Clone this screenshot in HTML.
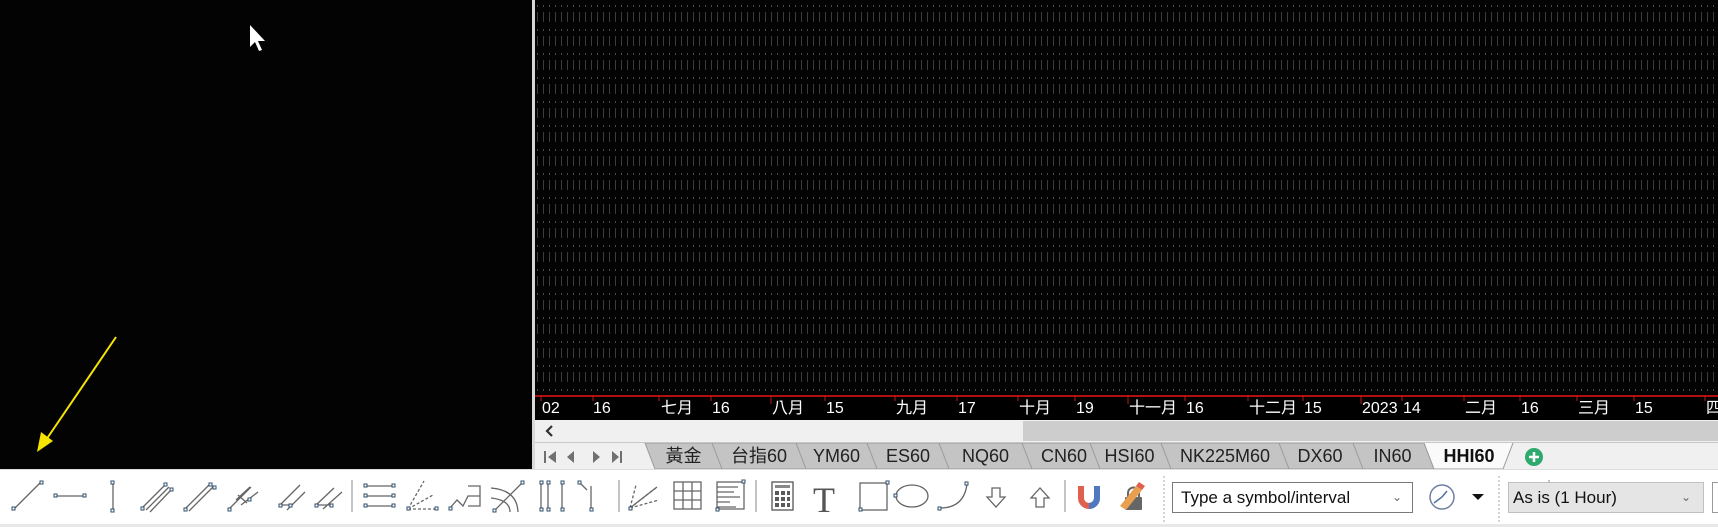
<!DOCTYPE html>
<html><head><meta charset="utf-8"><style>
*{margin:0;padding:0;box-sizing:border-box}
body{width:1718px;height:527px;overflow:hidden;background:#fff;position:relative;font-family:"Liberation Sans","Noto Sans CJK TC",sans-serif}
.abs{position:absolute}
.lbl{position:absolute;top:400px;color:#fff;font-size:16px;line-height:18px;white-space:nowrap}
.tab{position:absolute;top:443px;height:27px;font-size:18px;line-height:27px;color:#222;text-align:center}
</style></head><body>
<div class="abs" style="left:0;top:0;width:532px;height:469px;background:#030303"></div>
<div class="abs" style="left:532px;top:0;width:3px;height:469px;background:#d8d8d8"></div>
<svg class="abs" style="left:0;top:0" width="535" height="469">
<path d="M116 337 L46 440" stroke="#f5e400" stroke-width="2"/>
<path d="M37 452 L41 432 L53 441 Z" fill="#f5e400"/>
<path d="M250 25 L250 47 L255 42 L259 51 L262 50 L258 41 L265 41 Z" fill="#fff"/>
</svg>
<svg class="abs" style="left:535px;top:0" width="1183" height="396">
<defs><pattern id="g" width="6" height="24" patternUnits="userSpaceOnUse">
<rect x="2" y="5" width="1" height="2" fill="#4a4a4a"/>
<rect x="2" y="12" width="1" height="10" fill="#3c3c3c"/>
</pattern></defs>
<rect width="1183" height="396" fill="#030303"/>
<rect width="1183" height="396" fill="url(#g)"/>
</svg>
<div class="abs" style="left:535px;top:394px;width:1183px;height:26px;background:#000"></div>
<div class="abs" style="left:535px;top:395px;width:1183px;height:2px;background:#b01010"></div>
<svg class="abs" style="left:535px;top:395px" width="1183" height="10">
<g stroke="#c01818" stroke-width="1">
<path d="M6 0v6M58 0v6M124 0v6M176 0v6M236 0v9M290 0v6M360 0v6M422 0v6M483 0v6M540 0v6M593 0v9M650 0v6M713 0v6M768 0v6M826 0v9M867 0v6M929 0v6M985 0v6M1042 0v6M1099 0v6M1170 0v6"/>
</g></svg>
<div class="lbl" style="left:542px">02</div><div class="lbl" style="left:593px">16</div>
<div class="lbl" style="left:661px">七月</div><div class="lbl" style="left:712px">16</div>
<div class="lbl" style="left:772px">八月</div><div class="lbl" style="left:826px">15</div>
<div class="lbl" style="left:896px">九月</div><div class="lbl" style="left:958px">17</div>
<div class="lbl" style="left:1019px">十月</div><div class="lbl" style="left:1076px">19</div>
<div class="lbl" style="left:1129px">十一月</div><div class="lbl" style="left:1186px">16</div>
<div class="lbl" style="left:1249px">十二月</div><div class="lbl" style="left:1304px">15</div>
<div class="lbl" style="left:1362px">2023</div><div class="lbl" style="left:1403px">14</div>
<div class="lbl" style="left:1465px">二月</div><div class="lbl" style="left:1521px">16</div>
<div class="lbl" style="left:1578px">三月</div><div class="lbl" style="left:1635px">15</div>
<div class="lbl" style="left:1706px">四</div>
<!-- scrollbar -->
<div class="abs" style="left:535px;top:420px;width:1183px;height:22px;background:#f0f0f0"></div>
<div class="abs" style="left:1023px;top:421px;width:695px;height:20px;background:#cdcdcd"></div>
<svg class="abs" style="left:540px;top:423px" width="20" height="16"><path d="M12 3 L7 8 L12 13" stroke="#333" stroke-width="2.2" fill="none"/></svg>
<!-- tabs -->
<div class="abs" style="left:535px;top:442px;width:1183px;height:28px;background:#f0f0f0;border-top:1px solid #c8c8c8"></div>
<svg class="abs" style="left:540px;top:446px" width="95" height="22" fill="#707070">
<rect x="4" y="5" width="2" height="12"/><path d="M16 5v12l-8-6z"/>
<path d="M34 5v12l-7-6z"/><path d="M53 5v12l7-6z"/>
<path d="M72 5v12l7-6z"/><rect x="80" y="5" width="2" height="12"/>
</svg>
<svg class="abs" style="left:0;top:443px" width="1718" height="27">
<path d="M645 0 L655 26 L1434 26 L1424 0 Z" fill="#c4c4c4" stroke="#9a9a9a"/>
<g stroke="#9a9a9a" fill="none"><path d="M712 0l10 26M796 0l10 26M867 0l10 26M939 0l10 26M1022 0l10 26M1090 0l10 26M1161 0l10 26M1279 0l10 26M1353 0l10 26"/></g>
<path d="M1424 0 L1434 26 L1503 26 L1513 0" fill="#fafafa" stroke="#9a9a9a"/>
</svg>
<svg class="abs" style="left:1525px;top:448px" width="20" height="20"><circle cx="9" cy="9" r="9" fill="#2eaa6e"/><path d="M9 4v10M4 9h10" stroke="#fff" stroke-width="2.5"/></svg>
<div class="tab" style="left:655px;width:57px">黃金</div>
<div class="tab" style="left:722px;width:74px">台指60</div>
<div class="tab" style="left:806px;width:61px">YM60</div>
<div class="tab" style="left:877px;width:62px">ES60</div>
<div class="tab" style="left:949px;width:73px">NQ60</div>
<div class="tab" style="left:1030px;width:68px">CN60</div>
<div class="tab" style="left:1098px;width:63px">HSI60</div>
<div class="tab" style="left:1171px;width:108px">NK225M60</div>
<div class="tab" style="left:1287px;width:66px">DX60</div>
<div class="tab" style="left:1361px;width:63px">IN60</div>
<div class="tab" style="left:1432px;width:74px;font-weight:bold;color:#111">HHI60</div>
<!-- toolbar -->
<div class="abs" style="left:0;top:469px;width:1718px;height:58px;background:#fff;border-top:1px solid #ddd"></div>
<div class="abs" style="left:0;top:524px;width:1718px;height:3px;background:#e8e8e8"></div>
<svg class="abs" style="left:0;top:469px" width="1718" height="56">
<g transform="translate(0,-469)" fill="none" stroke="#666" stroke-width="1.3">
<path d="M14 509L41 482"/><path d="M56 496H84"/><path d="M113 482V511"/>
<path d="M142 508L165 485M146 510L169 487M150 512L171 490"/>
<path d="M185 509L210 484M189 511L213 487"/>
<path d="M229 509L251 487M236 500L250 487M241 505L258 492M238 495L247 503"/>
<path d="M280 505L300 485M287 510L305 492M279 505L290 505"/>
<path d="M316 505L334 488M323 509L342 492M316 505L331 505"/>
<path d="M366 486H393M366 496H393M366 506H393"/>
<path d="M408 509L436 509M408 509L424 481M408 509L433 495" stroke-dasharray="3 2"/>
<path d="M450 508L457 500L463 506L468 496H480M468 486H480V506H468M468 496H478"/>
<path d="M494 511L522 483M491 488Q517 490 518 512M491 498Q510 500 510 512"/>
<path d="M541 482V510M548 482V510M562 482V510M579 482L587 490M591 486V510"/>
<path d="M630 508L657 487M630 508L636 485M630 508L659 500" stroke-dasharray="3 2"/>
<path d="M630 508L657 487"/>
<rect x="674" y="482" width="27" height="27"/><path d="M683 482V509M692 482V509M674 491H701M674 500H701"/>
<rect x="717" y="482" width="27" height="27"/><path d="M717 487H738M717 492H734M717 497H740M717 502H730M717 507H736"/>
<rect x="772" y="482" width="21" height="28" stroke="#555"/>
<rect x="860" y="483" width="27" height="27"/>
<ellipse cx="912" cy="496" rx="16" ry="11"/>
<path d="M940 508Q964 508 967 484"/>
<path d="M992 488H1000V497H1005L996 507L987 497H992Z"/>
<path d="M1036 507H1044V498H1049L1040 488L1031 498H1036Z"/>
</g>
<text x="824" y="43" font-family="Liberation Serif,serif" font-size="36" fill="#555" text-anchor="middle">T</text>
<g transform="translate(0,-469)" fill="#5a5a5a">
<rect x="775" y="485" width="15" height="3" fill="#888"/>
<rect x="775" y="491" width="4" height="4"/><rect x="781" y="491" width="4" height="4"/><rect x="787" y="491" width="3" height="4"/>
<rect x="775" y="497" width="4" height="4"/><rect x="781" y="497" width="4" height="4"/><rect x="787" y="497" width="3" height="4"/>
<rect x="775" y="503" width="4" height="4"/><rect x="781" y="503" width="4" height="4"/><rect x="787" y="503" width="3" height="4"/>
</g>
<g transform="translate(0,-469)" fill="#fff" stroke="#2e4e6e" stroke-width="1">
<rect x="12" y="507" width="3" height="3"/><rect x="40" y="481" width="3" height="3"/>
<rect x="54" y="494" width="3" height="3"/><rect x="83" y="494" width="3" height="3"/>
<rect x="111" y="481" width="3" height="3"/><rect x="111" y="509" width="3" height="3"/>
<rect x="164" y="483" width="3" height="3"/><rect x="170" y="488" width="3" height="3"/><rect x="141" y="507" width="3" height="3"/>
<rect x="209" y="483" width="3" height="3"/><rect x="213" y="486" width="3" height="3"/><rect x="184" y="508" width="3" height="3"/>
<rect x="228" y="508" width="3" height="3"/><rect x="248" y="498" width="3" height="3"/>
<rect x="279" y="504" width="3" height="3"/><rect x="289" y="504" width="3" height="3"/>
<rect x="315" y="504" width="3" height="3"/><rect x="330" y="504" width="3" height="3"/>
<rect x="364" y="484" width="3" height="3"/><rect x="392" y="484" width="3" height="3"/><rect x="364" y="494" width="3" height="3"/><rect x="392" y="494" width="3" height="3"/><rect x="364" y="504" width="3" height="3"/><rect x="392" y="504" width="3" height="3"/>
<rect x="407" y="507" width="3" height="3"/><rect x="435" y="507" width="3" height="3"/><rect x="449" y="507" width="3" height="3"/>
<rect x="493" y="509" width="3" height="3"/><rect x="521" y="481" width="3" height="3"/>
<rect x="540" y="481" width="3" height="3"/><rect x="547" y="481" width="3" height="3"/><rect x="561" y="481" width="3" height="3"/><rect x="578" y="481" width="3" height="3"/>
<rect x="540" y="508" width="3" height="3"/><rect x="547" y="508" width="3" height="3"/><rect x="561" y="508" width="3" height="3"/><rect x="590" y="508" width="3" height="3"/>
<rect x="629" y="507" width="3" height="3"/><rect x="716" y="508" width="3" height="3"/><rect x="742" y="480" width="3" height="3"/>
<rect x="859" y="508" width="3" height="3"/><rect x="886" y="481" width="3" height="3"/><rect x="894" y="494" width="3" height="3"/>
<rect x="938" y="507" width="3" height="3"/><rect x="965" y="482" width="3" height="3"/>
</g>
<g transform="translate(0,-469)" stroke="#888" stroke-width="1">
<path d="M352 480V512M619 480V512M756 480V512M1065 480V512M1549 480V512"/>
<path d="M1164 476V524M1499 476V524" stroke-dasharray="2 2" stroke="#aaa"/>
</g>
<g transform="translate(0,-469)">
<path d="M1081 486V498A8 8 0 0 0 1097 498V486" fill="none" stroke="#e06050" stroke-width="6"/>
<path d="M1089 506A8 8 0 0 0 1097 498V486" fill="none" stroke="#5078c0" stroke-width="6"/>
<rect x="1125" y="497" width="17" height="13" rx="1" fill="#666"/>
<path d="M1128 497V493A5 5 0 0 1 1139 493V497" fill="none" stroke="#666" stroke-width="2"/>
<path d="M1120 506L1136 486L1142 490L1126 510Z" fill="#e8a050"/>
<path d="M1136 486L1139 482L1145 486L1142 490Z" fill="#e06050"/>
<circle cx="1442" cy="497" r="12" fill="none" stroke="#7080a0" stroke-width="1.5"/>
<path d="M1434 503L1442 497L1447 491" fill="none" stroke="#5070a0" stroke-width="1.5"/>
<path d="M1472 494H1484L1478 500Z" fill="#111"/>
</g>
</svg>
<div class="abs" style="left:1172px;top:482px;width:241px;height:31px;border:1px solid #7a7a7a;background:#fff;font-size:17px;line-height:29px;padding-left:8px;color:#111">Type a symbol/interval<span style="position:absolute;right:10px;top:0;color:#666;font-size:12px">&#8964;</span></div>
<div class="abs" style="left:1508px;top:482px;width:196px;height:31px;border:1px solid #c0c0c0;background:#e5e5e5;font-size:17px;line-height:29px;padding-left:4px;color:#111">As is (1 Hour)<span style="position:absolute;right:12px;top:0;color:#666;font-size:12px">&#8964;</span></div>
<div class="abs" style="left:1712px;top:482px;width:10px;height:31px;border:1px solid #999;background:#fff"></div>
</body></html>
